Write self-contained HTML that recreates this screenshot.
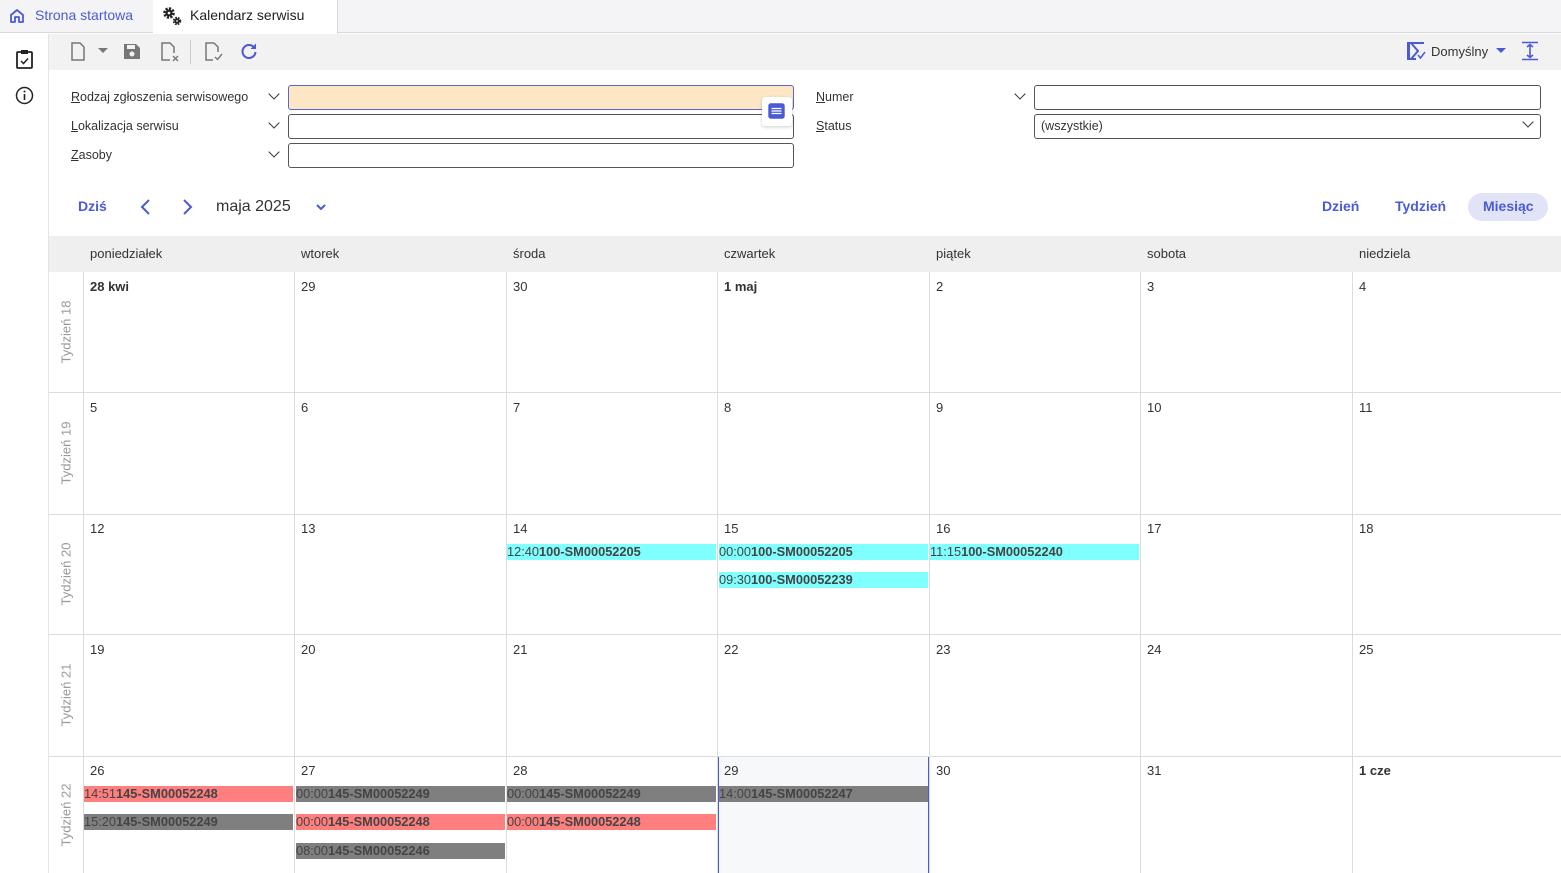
<!DOCTYPE html>
<html><head><meta charset="utf-8"><style>
*{box-sizing:border-box;margin:0;padding:0}
body{width:1561px;height:873px;overflow:hidden;background:#fff;font-family:"Liberation Sans",sans-serif;font-size:13px;color:#333;position:relative}
.a{position:absolute}
.tabbar{left:0;top:0;width:1561px;height:33px;background:#f4f4f7;border-bottom:1px solid #d8d8dc}
.lbl{font-size:12.5px;color:#333}
.inp{position:absolute;height:25px;border:1px solid #555;border-radius:3px;background:#fff}
.chev{position:absolute;width:8px;height:8px;border-right:1.8px solid #333;border-bottom:1.8px solid #333;transform:rotate(45deg)}
.hd{top:236px;height:36px;background:#efefef;left:49px;width:1512px}
.dn{font-size:13px;color:#333}
.vl{position:absolute;width:1px;background:#dcdcdc;top:272px;height:601px}
.hl{position:absolute;height:1px;background:#dcdcdc;left:49px;width:1512px}
.wk{position:absolute;left:49px;width:34px;color:#999;font-size:13px}
.wk span{position:absolute;left:50%;top:50%;transform:translate(-50%,-50%) rotate(-90deg);white-space:nowrap}
.d{position:absolute;font-size:13px;color:#333}
.ev{position:absolute;height:16px;font-size:12.8px;line-height:16px;color:#444;white-space:nowrap;overflow:hidden}
.ev b{font-weight:bold}
.c{background:#80ffff}.r{background:#ff7f7f}.g{background:#7f7f7f}
.vbtn{position:absolute;top:193px;height:27px;line-height:27px;font-size:14px;font-weight:bold;color:#4a5bd6}
</style></head><body>
<div class="a tabbar"></div>
<div class="a" style="left:153px;top:0;width:185px;height:34px;background:#fff;border-right:1px solid #d8d8dc"></div>
<svg class="a" style="left:8px;top:7px" width="18" height="18" viewBox="0 0 18 18"><path d="M3 8 L9 3 L15 8 V15 H11 V10 H7 V15 H3 Z" fill="none" stroke="#4a5bd6" stroke-width="1.8" stroke-linejoin="round"/></svg>
<div class="a" style="left:35px;top:7px;font-size:14px;color:#4a5bd6">Strona startowa</div>
<svg class="a" style="left:162px;top:6px" width="20" height="20" viewBox="0 0 20 20"><circle cx="7" cy="7" r="4.5" fill="none" stroke="#222" stroke-width="2.6" stroke-dasharray="2.2 1.3"/><circle cx="7" cy="7" r="3.6" fill="#222"/><circle cx="7" cy="7" r="1.3" fill="#fff"/><circle cx="15" cy="15" r="3.2" fill="none" stroke="#222" stroke-width="2" stroke-dasharray="1.6 1"/><circle cx="15" cy="15" r="2.6" fill="#222"/><circle cx="15" cy="15" r="0.9" fill="#fff"/></svg>
<div class="a" style="left:190px;top:7px;font-size:14px;color:#222">Kalendarz serwisu</div>
<!-- sidebar -->
<div class="a" style="left:0;top:34px;width:49px;height:839px;background:#fff;border-right:1px solid #e4e4e4"></div>
<svg class="a" style="left:15px;top:49px" width="19" height="21" viewBox="0 0 19 21"><rect x="2" y="3" width="15" height="16" rx="1" fill="none" stroke="#222" stroke-width="1.8"/><rect x="6" y="1" width="7" height="4" fill="#222"/><path d="M6 12 L8.5 14.5 L13 9.5" fill="none" stroke="#222" stroke-width="1.5"/></svg>
<svg class="a" style="left:15px;top:86px" width="19" height="19" viewBox="0 0 19 19"><circle cx="9.5" cy="9.5" r="8" fill="none" stroke="#222" stroke-width="1.5"/><rect x="8.7" y="8" width="1.6" height="6" fill="#222"/><circle cx="9.5" cy="5.5" r="1" fill="#222"/></svg>
<!-- toolbar -->
<div class="a" style="left:49px;top:34px;width:1512px;height:36px;background:#f2f2f2"></div>
<svg class="a" style="left:70px;top:42px" width="16" height="19" viewBox="0 0 16 19"><path d="M2 1 H10 L14 5 V18 H2 Z" fill="none" stroke="#777" stroke-width="1.5"/></svg>
<svg class="a" style="left:98px;top:48px" width="10" height="6"><path d="M0 0 L10 0 L5 5Z" fill="#777"/></svg>
<svg class="a" style="left:123px;top:43px" width="18" height="17" viewBox="0 0 18 17"><path d="M1 1 H13 L17 5 V16 H1 Z" fill="#777"/><rect x="4" y="2" width="8" height="4" fill="#f2f2f2"/><circle cx="9" cy="11" r="2.5" fill="#f2f2f2"/></svg>
<svg class="a" style="left:160px;top:42px" width="20" height="20" viewBox="0 0 20 20"><path d="M10 18 H2 V1 H10 L14 5 V11" fill="none" stroke="#777" stroke-width="1.5"/><path d="M13 14 L18 19 M18 14 L13 19" stroke="#777" stroke-width="1.4"/></svg>
<div class="a" style="left:190px;top:40px;width:1px;height:24px;background:#ccc"></div>
<svg class="a" style="left:204px;top:42px" width="20" height="20" viewBox="0 0 20 20"><path d="M9 18 H2 V1 H10 L14 5 V10" fill="none" stroke="#777" stroke-width="1.5"/><path d="M11 15 L13.5 17.5 L18 12" fill="none" stroke="#777" stroke-width="1.4"/></svg>
<svg class="a" style="left:240px;top:42px" width="18" height="18" viewBox="0 0 18 18"><path d="M14.5 6 A6.5 6.5 0 1 0 15.5 10" fill="none" stroke="#4a5bd6" stroke-width="2"/><path d="M16 1.5 V7 H10.5 Z" fill="#4a5bd6"/></svg>
<svg class="a" style="left:1407px;top:42px" width="20" height="18" viewBox="0 0 20 18"><rect x="0" y="0" width="3" height="18" fill="#4a5bd6"/><path d="M3 1 H17 M4 1 L11 9 L4 17 H9" fill="none" stroke="#4a5bd6" stroke-width="2"/><path d="M11 13 L13.5 16 L18 10" fill="none" stroke="#4a5bd6" stroke-width="1.5"/></svg>
<div class="a" style="left:1431px;top:44px;font-size:13px;color:#333">Domyślny</div>
<svg class="a" style="left:1496px;top:48px" width="10" height="6"><path d="M0 0 L10 0 L5 5Z" fill="#4a5bd6"/></svg>
<svg class="a" style="left:1521px;top:41px" width="18" height="20" viewBox="0 0 18 20"><path d="M1 1.5 H17 M1 18.5 H17 M9 4 V16 M6 6 L9 3.5 L12 6 M6 14 L9 16.5 L12 14" fill="none" stroke="#4a5bd6" stroke-width="1.6"/></svg>
<!-- form -->
<div class="a lbl" style="left:71px;top:90px"><u>R</u>odzaj zgłoszenia serwisowego</div>
<div class="chev" style="left:270px;top:90px"></div>
<div class="inp" style="left:288px;top:85px;width:506px;background:#fde6c4;border-color:#5a65d0"></div>
<div class="a lbl" style="left:71px;top:119px"><u>L</u>okalizacja serwisu</div>
<div class="chev" style="left:270px;top:119px"></div>
<div class="inp" style="left:288px;top:114px;width:506px"></div>
<div class="a lbl" style="left:71px;top:148px"><u>Z</u>asoby</div>
<div class="chev" style="left:270px;top:148px"></div>
<div class="inp" style="left:288px;top:143px;width:506px"></div>
<div class="a" style="left:762px;top:97px;width:30px;height:29px;background:#fff;border-radius:3px;box-shadow:0 1px 3px rgba(0,0,0,.2)"></div>
<svg class="a" style="left:768px;top:103px" width="17" height="16" viewBox="0 0 17 16"><rect x="0.8" y="0.8" width="15.4" height="14.4" rx="2" fill="#4a5bd6" stroke="#4a5bd6"/><path d="M3.5 5.5 H13.5 M3.5 8 H13.5 M3.5 10.5 H13.5" stroke="#fff" stroke-width="1.3"/></svg>
<div class="a lbl" style="left:816px;top:90px"><u>N</u>umer</div>
<div class="chev" style="left:1016px;top:90px"></div>
<div class="inp" style="left:1034px;top:85px;width:507px"></div>
<div class="a lbl" style="left:816px;top:119px"><u>S</u>tatus</div>
<div class="inp" style="left:1034px;top:114px;width:507px"></div>
<div class="a lbl" style="left:1041px;top:119px">(wszystkie)</div>
<div class="chev" style="left:1524px;top:118px"></div>
<!-- nav -->
<div class="vbtn" style="left:78px">Dziś</div>
<svg class="a" style="left:139px;top:198px" width="12" height="18"><path d="M10 2 L3 9 L10 16" fill="none" stroke="#4a5bd6" stroke-width="2"/></svg>
<svg class="a" style="left:182px;top:198px" width="12" height="18"><path d="M2 2 L9 9 L2 16" fill="none" stroke="#4a5bd6" stroke-width="2"/></svg>
<div class="a" style="left:216px;top:198px;font-size:16px;color:#333">maja 2025</div>
<svg class="a" style="left:315px;top:203px" width="12" height="8"><path d="M2 2 L6 6 L10 2" fill="none" stroke="#4a5bd6" stroke-width="2"/></svg>
<div class="vbtn" style="left:1322px">Dzień</div>
<div class="vbtn" style="left:1395px">Tydzień</div>
<div class="a" style="left:1468px;top:193px;width:80px;height:28px;background:#e1e3f7;border-radius:14px"></div>
<div class="vbtn" style="left:1483px">Miesiąc</div>
<!-- header -->
<div class="a hd"></div>
<div class="a dn" style="left:90px;top:246px">poniedziałek</div>
<div class="a dn" style="left:301px;top:246px">wtorek</div>
<div class="a dn" style="left:513px;top:246px">środa</div>
<div class="a dn" style="left:724px;top:246px">czwartek</div>
<div class="a dn" style="left:936px;top:246px">piątek</div>
<div class="a dn" style="left:1147px;top:246px">sobota</div>
<div class="a dn" style="left:1359px;top:246px">niedziela</div>
<!-- grid -->
<div class="a" style="left:718px;top:756px;width:211px;height:117px;background:#f7f8fa;border:1px solid #4a5bd6;border-bottom:none"></div>
<div class="vl" style="left:83px"></div><div class="vl" style="left:294px"></div><div class="vl" style="left:506px"></div><div class="vl" style="left:717px"></div><div class="vl" style="left:929px"></div><div class="vl" style="left:1140px"></div><div class="vl" style="left:1352px"></div>
<div class="hl" style="top:392px"></div><div class="hl" style="top:514px"></div><div class="hl" style="top:634px"></div><div class="hl" style="top:756px"></div>
<div class="wk" style="top:272px;height:120px"><span>Tydzień 18</span></div>
<div class="wk" style="top:392px;height:122px"><span>Tydzień 19</span></div>
<div class="wk" style="top:514px;height:120px"><span>Tydzień 20</span></div>
<div class="wk" style="top:634px;height:122px"><span>Tydzień 21</span></div>
<div class="wk" style="top:756px;height:117px"><span>Tydzień 22</span></div>
<!-- days -->
<div class="d" style="left:90px;top:279px;font-weight:bold">28 kwi</div><div class="d" style="left:301px;top:279px">29</div><div class="d" style="left:513px;top:279px">30</div><div class="d" style="left:724px;top:279px;font-weight:bold">1 maj</div><div class="d" style="left:936px;top:279px">2</div><div class="d" style="left:1147px;top:279px">3</div><div class="d" style="left:1359px;top:279px">4</div>
<div class="d" style="left:90px;top:400px">5</div><div class="d" style="left:301px;top:400px">6</div><div class="d" style="left:513px;top:400px">7</div><div class="d" style="left:724px;top:400px">8</div><div class="d" style="left:936px;top:400px">9</div><div class="d" style="left:1147px;top:400px">10</div><div class="d" style="left:1359px;top:400px">11</div>
<div class="d" style="left:90px;top:521px">12</div><div class="d" style="left:301px;top:521px">13</div><div class="d" style="left:513px;top:521px">14</div><div class="d" style="left:724px;top:521px">15</div><div class="d" style="left:936px;top:521px">16</div><div class="d" style="left:1147px;top:521px">17</div><div class="d" style="left:1359px;top:521px">18</div>
<div class="d" style="left:90px;top:642px">19</div><div class="d" style="left:301px;top:642px">20</div><div class="d" style="left:513px;top:642px">21</div><div class="d" style="left:724px;top:642px">22</div><div class="d" style="left:936px;top:642px">23</div><div class="d" style="left:1147px;top:642px">24</div><div class="d" style="left:1359px;top:642px">25</div>
<div class="d" style="left:90px;top:763px">26</div><div class="d" style="left:301px;top:763px">27</div><div class="d" style="left:513px;top:763px">28</div><div class="d" style="left:724px;top:763px">29</div><div class="d" style="left:936px;top:763px">30</div><div class="d" style="left:1147px;top:763px">31</div><div class="d" style="left:1359px;top:763px;font-weight:bold">1 cze</div>
<!-- events -->
<div class="ev c" style="left:507px;top:544px;width:209px">12:40<b>100-SM00052205</b></div>
<div class="ev c" style="left:719px;top:544px;width:209px">00:00<b>100-SM00052205</b></div>
<div class="ev c" style="left:719px;top:572px;width:209px">09:30<b>100-SM00052239</b></div>
<div class="ev c" style="left:930px;top:544px;width:209px">11:15<b>100-SM00052240</b></div>
<div class="ev r" style="left:84px;top:786px;width:209px">14:51<b>145-SM00052248</b></div>
<div class="ev g" style="left:84px;top:814px;width:209px">15:20<b>145-SM00052249</b></div>
<div class="ev g" style="left:296px;top:786px;width:209px">00:00<b>145-SM00052249</b></div>
<div class="ev r" style="left:296px;top:814px;width:209px">00:00<b>145-SM00052248</b></div>
<div class="ev g" style="left:296px;top:843px;width:209px">08:00<b>145-SM00052246</b></div>
<div class="ev g" style="left:507px;top:786px;width:209px">00:00<b>145-SM00052249</b></div>
<div class="ev r" style="left:507px;top:814px;width:209px">00:00<b>145-SM00052248</b></div>
<div class="ev g" style="left:719px;top:786px;width:209px">14:00<b>145-SM00052247</b></div>
</body></html>
